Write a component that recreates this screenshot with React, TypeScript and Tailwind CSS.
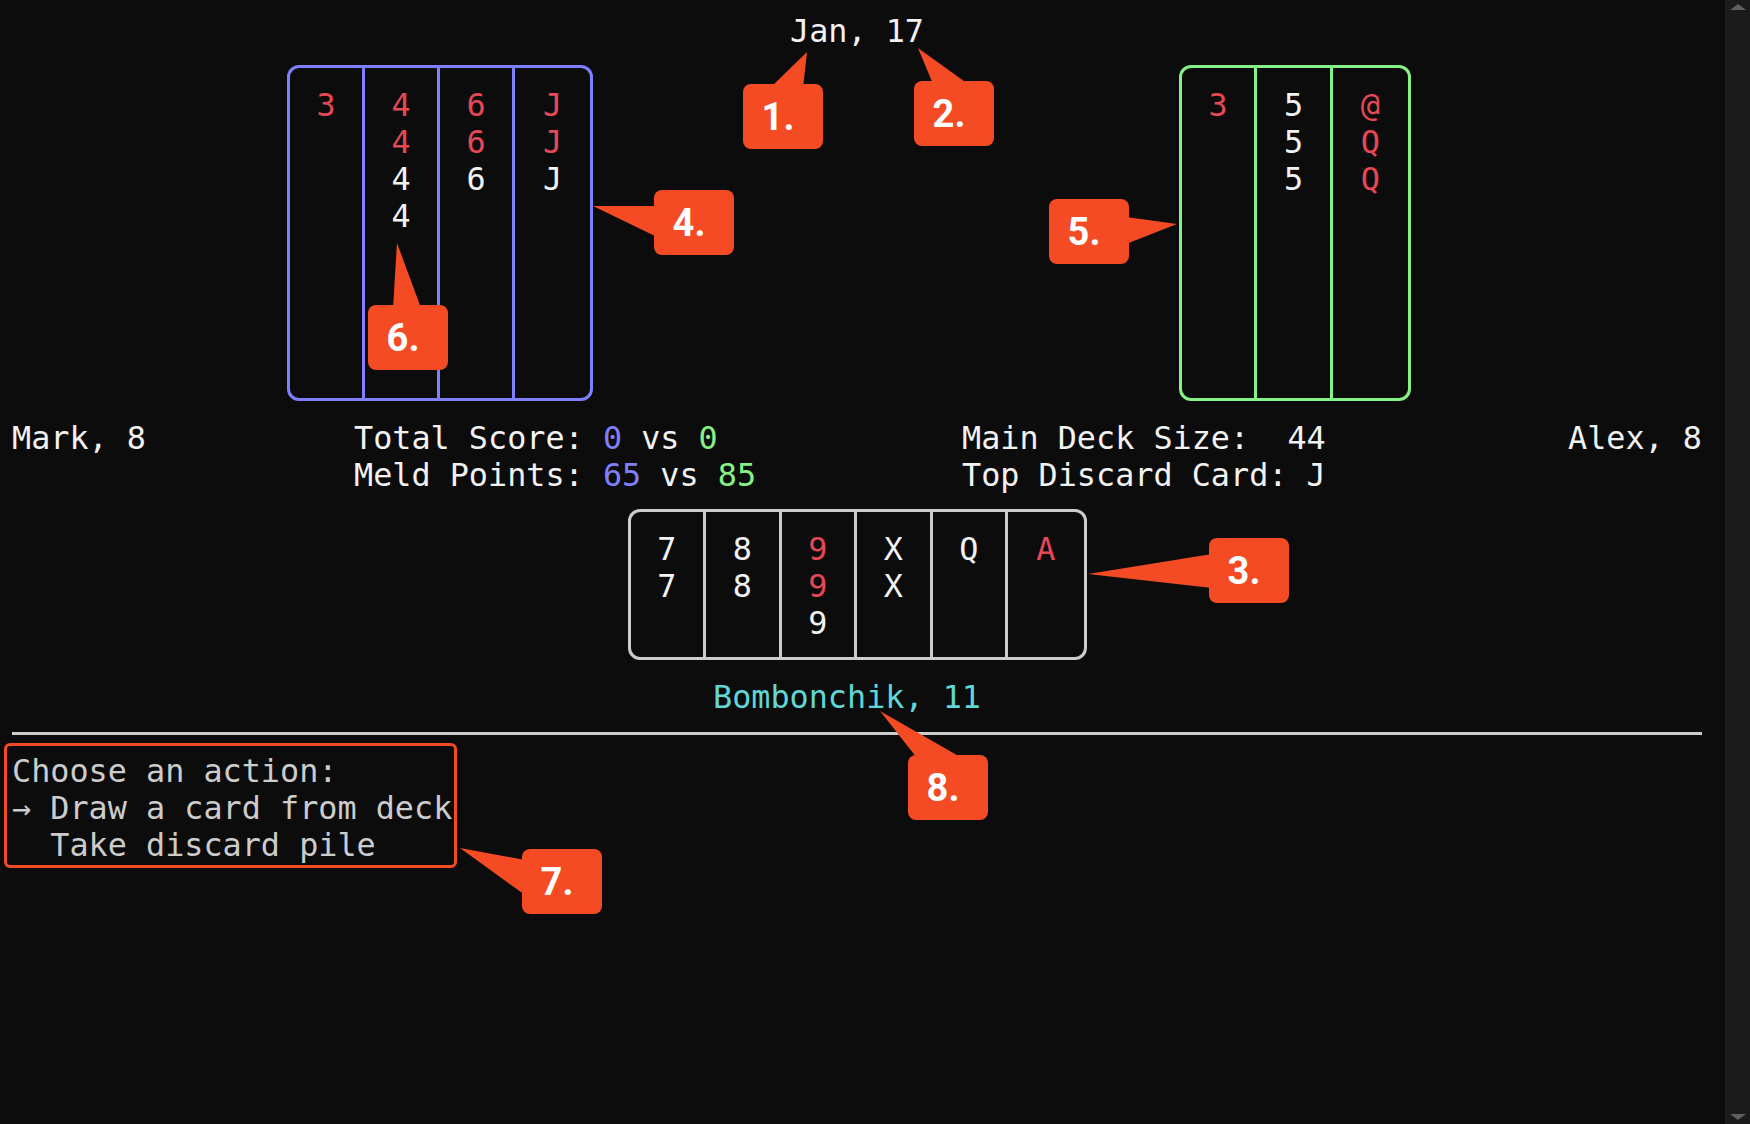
type Card = { v: string; red?: boolean };

const leftHand: Card[][] = [
  [{ v: '3', red: true }],
  [{ v: '4', red: true }, { v: '4', red: true }, { v: '4' }, { v: '4' }],
  [{ v: '6', red: true }, { v: '6', red: true }, { v: '6' }],
  [{ v: 'J', red: true }, { v: 'J', red: true }, { v: 'J' }],
];

const rightHand: Card[][] = [
  [{ v: '3', red: true }],
  [{ v: '5' }, { v: '5' }, { v: '5' }],
  [{ v: '@', red: true }, { v: 'Q', red: true }, { v: 'Q', red: true }],
];

const myHand: Card[][] = [
  [{ v: '7' }, { v: '7' }],
  [{ v: '8' }, { v: '8' }],
  [{ v: '9', red: true }, { v: '9', red: true }, { v: '9' }],
  [{ v: 'X' }, { v: 'X' }],
  [{ v: 'Q' }],
  [{ v: 'A', red: true }],
];

function Column({ cards }: { cards: Card[] }) {
  return (
    <div className="flex flex-col items-center pt-[18px]">
      {cards.map((c, i) => (
        <span key={i} className={c.red ? 'text-[#e74856]' : 'text-[#f2f2f2]'}>
          {c.v}
        </span>
      ))}
    </div>
  );
}

// numbered annotation bubble (the triangles are drawn in the svg overlay)
function Bubble({ label, className }: { label: string; className: string }) {
  return (
    <div
      className={`absolute w-[80px] h-[65px] rounded-[8px] bg-[#f44b24] flex items-center justify-center pr-[10px] text-white font-bold text-[38px] font-['Roboto',sans-serif] leading-none ${className}`}
    >
      {label}
    </div>
  );
}

export default function App() {
  return (
    <div className="relative flex h-[1124px] w-full overflow-hidden bg-[#0c0c0c] font-['DejaVu_Sans_Mono','Liberation_Mono',monospace] text-[31.8px] leading-[37px] text-[#f2f2f2]">
      <main className="flex-1 pl-[12px] pr-[23px] pt-[12px]">
        <div className="h-[37px] text-center">Jan, 17</div>

        {/* opponents */}
        <div className="flex h-[370px] pt-[16px]">
          <div className="ml-[275px] grid h-[336px] w-[306px] grid-cols-4 divide-x-[3px] divide-[#8080ff] rounded-[12px] border-[3px] border-[#8080ff]">
            {leftHand.map((col, i) => (
              <Column key={i} cards={col} />
            ))}
          </div>
          <div className="ml-[586px] grid h-[336px] w-[232px] grid-cols-3 divide-x-[3px] divide-[#86f286] rounded-[12px] border-[3px] border-[#86f286]">
            {rightHand.map((col, i) => (
              <Column key={i} cards={col} />
            ))}
          </div>
        </div>

        {/* info */}
        <div className="grid grid-cols-[342px_608px_1fr_auto] whitespace-pre">
          <div>Mark, 8</div>
          <div>
            Total Score: <span className="text-[#8080ff]">0</span> vs <span className="text-[#86f286]">0</span>
          </div>
          <div>Main Deck Size:  44</div>
          <div className="text-right">Alex, 8</div>
          <div />
          <div>
            Meld Points: <span className="text-[#8080ff]">65</span> vs <span className="text-[#86f286]">85</span>
          </div>
          <div>Top Discard Card: J</div>
          <div />
        </div>

        {/* my hand */}
        <div className="flex h-[185px] justify-center pt-[16px]">
          <div className="grid h-[151px] w-[459px] grid-cols-6 divide-x-[3px] divide-[#cccccc] rounded-[12px] border-[3px] border-[#cccccc]">
            {myHand.map((col, i) => (
              <Column key={i} cards={col} />
            ))}
          </div>
        </div>

        <div className="h-[37px] pr-[20px] text-center text-[#61d6d6]">Bombonchik, 11</div>

        <div className="flex h-[37px] items-center">
          <div className="h-[3px] w-full bg-[#cccccc]" />
        </div>

        <div className="whitespace-pre text-[#cccccc]">
          <div>Choose an action:</div>
          <div>→ Draw a card from deck</div>
          <div>  Take discard pile</div>
        </div>
      </main>

      {/* scrollbar */}
      <div className="flex w-[25px] flex-col items-center justify-between bg-[#1b1b1b] py-[4px] pl-[1px]">
        <div className="h-0 w-0 border-x-[8px] border-b-[6px] border-x-transparent border-b-[#5f5f5f]" />
        <div className="h-0 w-0 border-x-[8px] border-t-[6px] border-x-transparent border-t-[#5f5f5f]" />
      </div>

      {/* annotations */}
      <div className="pointer-events-none absolute left-[4px] top-[743px] h-[125px] w-[453px] rounded-[6px] border-[3px] border-[#f44b24]" />
      <svg className="pointer-events-none absolute left-0 top-0" width="1750" height="1124">
        <g fill="#f44b24">
          <polygon points="807,52 770,88 803,88" />
          <polygon points="918,48 933,84 968,84" />
          <polygon points="1088,574 1212,554 1212,588" />
          <polygon points="593,206 657,206 657,237" />
          <polygon points="1177,224 1126,217 1126,244" />
          <polygon points="397,243 393,308 421,308" />
          <polygon points="460,848 525,860 525,895" />
          <polygon points="880,711 917,758 962,758" />
        </g>
      </svg>
      <Bubble label="1." className="left-[743px] top-[84px]" />
      <Bubble label="2." className="left-[914px] top-[81px]" />
      <Bubble label="3." className="left-[1209px] top-[538px]" />
      <Bubble label="4." className="left-[654px] top-[190px]" />
      <Bubble label="5." className="left-[1049px] top-[199px]" />
      <Bubble label="6." className="left-[368px] top-[305px]" />
      <Bubble label="7." className="left-[522px] top-[849px]" />
      <Bubble label="8." className="left-[908px] top-[755px]" />
    </div>
  );
}
